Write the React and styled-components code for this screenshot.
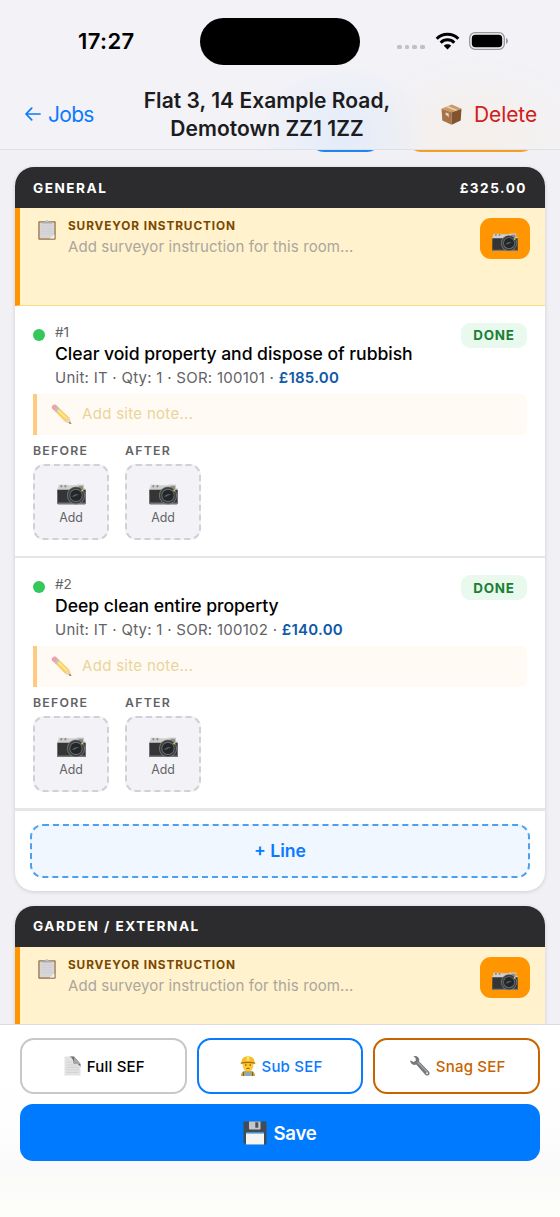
import React from "react";
import styled, { createGlobalStyle } from "styled-components";

const GlobalStyle = createGlobalStyle`
	* {
		box-sizing: border-box;
	}
	body {
		margin: 0;
		font-family: Inter, "Liberation Sans", sans-serif;
		color: #1c1c1e;
	}
	button {
		font-family: inherit;
		padding: 0;
		margin: 0;
	}
	svg {
		display: block;
		flex-shrink: 0;
	}
`;

const Screen = styled.div`
	width: 560px;
	height: 1217px;
	display: flex;
	flex-direction: column;
	overflow: hidden;
	background: #f0f0f5;
`;

const Header = styled.header`
	height: 150px;
	flex-shrink: 0;
	border-bottom: 1px solid #dfdfe8;
	background:
		radial-gradient(ellipse 85px 70px at 345px 135px, rgba(212, 228, 252, 0.5), transparent),
		radial-gradient(ellipse 120px 80px at 475px 135px, rgba(248, 236, 220, 0.5), transparent),
		#f2f2f7;
`;

const StatusBar = styled.div`
	height: 82px;
	display: grid;
	grid-template-columns: 200px 160px 200px;
	align-items: center;
`;

const Clock = styled.div`
	padding-left: 78px;
	font-size: 22px;
	font-weight: 600;
	letter-spacing: 0.4px;
	color: #000;
`;

const Island = styled.div`
	height: 47px;
	border-radius: 24px;
	background: #000;
`;

const Signals = styled.div`
	display: flex;
	align-items: center;
	padding-left: 37px;
`;

const Dots = styled.div`
	display: flex;
	gap: 3px;
	margin: 12px 10px 0 0;
`;

const Dot = styled.i`
	width: 4.7px;
	height: 4.7px;
	border-radius: 1.6px;
	background: #c0c0c5;
`;

const BatteryBox = styled.div`
	margin-left: 9px;
`;

const Nav = styled.div`
	height: 64px;
	display: grid;
	grid-template-columns: 120px 294px 146px;
	align-items: center;
`;

const BackLink = styled.button`
	display: flex;
	align-items: center;
	gap: 7px;
	margin-left: 25px;
	border: 0;
	background: none;
	color: #0a7aff;
	font-size: 21px;
	letter-spacing: -0.7px;
`;

const JobTitle = styled.h1`
	margin: 0;
	padding-top: 2px;
	text-align: center;
	font-size: 21px;
	line-height: 28px;
	font-weight: 600;
	letter-spacing: 0.05px;
`;

const DeleteLink = styled.button`
	display: flex;
	align-items: center;
	gap: 12px;
	margin-left: 27px;
	border: 0;
	background: none;
	color: #d0201a;
	font-size: 21px;
	letter-spacing: -0.1px;
`;

const Content = styled.main`
	flex: 1;
	min-height: 0;
	overflow: hidden;
`;

const PillRow = styled.div`
	height: 2px;
	display: flex;
	align-items: flex-end;
	gap: 26px;
	padding-left: 310px;
	overflow: hidden;
	margin-bottom: 15.4px;
`;

const Pill = styled.div`
	flex-shrink: 0;
	width: ${props => props.$width}px;
	height: 32px;
	border-radius: 14px;
	background: ${props => props.$color};
`;

const Card = styled.section`
	margin: 0 15px 15.3px;
	border-radius: 19px;
	overflow: hidden;
	background: #fff;
	box-shadow: 0 1px 4px rgba(0, 0, 0, 0.14);
`;

const CardHead = styled.div`
	height: 40.6px;
	display: flex;
	justify-content: space-between;
	align-items: center;
	padding: 0 18px;
	background: #2c2c2e;
	color: #fff;
	font-size: 13.6px;
	font-weight: 700;
	letter-spacing: 1.5px;
`;

const Instruction = styled.div`
	height: 98px;
	display: flex;
	align-items: flex-start;
	padding: 10px 15px 0 18px;
	border-left: 5px solid #ff9500;
	border-bottom: 1px solid #fbdc82;
	background: #fff2cc;
`;

const InstructionBody = styled.div`
	flex: 1;
	margin-left: 12px;
`;

const InstructionLabel = styled.div`
	font-size: 11.8px;
	line-height: 16px;
	font-weight: 700;
	letter-spacing: 0.9px;
	color: #7a4800;
`;

const InstructionHint = styled.div`
	font-size: 15px;
	line-height: 25px;
	letter-spacing: 0.1px;
	color: #aba69e;
`;

const PhotoButton = styled.button`
	width: 50px;
	height: 41px;
	display: flex;
	align-items: center;
	justify-content: center;
	padding-top: 7px;
	border: 0;
	border-radius: 11px;
	background: #ff9500;
`;

const Item = styled.article`
	height: 252.5px;
	padding: 16.6px 18px 0;
	border-bottom: ${props => (props.$last ? 3 : 2)}px solid #e6e6e9;
`;

const ItemTop = styled.div`
	display: flex;
	align-items: flex-start;
`;

const StatusDot = styled.i`
	width: 12px;
	height: 12px;
	margin: 6px 10px 0 0;
	border-radius: 50%;
	background: #34c759;
`;

const ItemInfo = styled.div`
	flex: 1;
`;

const ItemNumber = styled.div`
	font-size: 13.6px;
	line-height: 18px;
	color: #636366;
`;

const ItemName = styled.div`
	font-size: 17.6px;
	line-height: 26px;
	font-weight: 500;
	letter-spacing: -0.05px;
	color: #000;
`;

const ItemMeta = styled.div`
	font-size: 15px;
	line-height: 22px;
	letter-spacing: 0.26px;
	color: #636366;
	strong {
		font-weight: 600;
		color: #1058a8;
	}
`;

const Badge = styled.span`
	width: 66px;
	height: 25px;
	display: flex;
	align-items: center;
	justify-content: center;
	border-radius: 9px;
	background: #e9f9ee;
	color: #1a7f37;
	font-size: 13.4px;
	font-weight: 700;
	letter-spacing: 0.8px;
`;

const SiteNote = styled.div`
	height: 41px;
	display: flex;
	align-items: center;
	gap: 10px;
	margin-top: 5px;
	padding: 0 0 0 14px;
	border-left: 4px solid #ffca80;
	border-radius: 0 6px 6px 0;
	background: #fffbf4;
	color: #ead49a;
	font-size: 15px;
	letter-spacing: 0.3px;
	span {
		margin-top: -2px;
	}
`;

const Photos = styled.div`
	display: flex;
	gap: 16px;
	margin-top: 8.3px;
`;

const PhotoLabel = styled.div`
	font-size: 12.3px;
	line-height: 16px;
	font-weight: 600;
	letter-spacing: 1.25px;
	color: #636366;
`;

const PhotoSlot = styled.button`
	width: 76px;
	height: 76px;
	display: flex;
	flex-direction: column;
	align-items: center;
	justify-content: center;
	margin-top: 5px;
	padding-top: 11px;
	border: 2px dashed #d0d0d5;
	border-radius: 11px;
	background: #f2f2f7;
	color: #636366;
	font-size: 12.4px;
	line-height: 26px;
`;

const CardFoot = styled.div`
	padding: 12.9px 15px 13px;
`;

const AddLine = styled.button`
	width: 100%;
	height: 54px;
	border: 2px dashed #4d9ff4;
	border-radius: 13px;
	background: #f0f7ff;
	color: #0a7aff;
	font-size: 17.6px;
	font-weight: 600;
`;

const Footer = styled.footer`
	height: 193px;
	flex-shrink: 0;
	padding: 13px 20px 0;
	border-top: 1px solid #dcdce0;
	background: linear-gradient(#fff 0%, #fefefe 50%, #fafafa 74%, #fdfdfa 100%);
`;

const ExportRow = styled.div`
	display: grid;
	grid-template-columns: repeat(3, 1fr);
	gap: 10px;
`;

const ExportButton = styled.button`
	height: 56px;
	display: flex;
	align-items: center;
	justify-content: center;
	gap: 6px;
	padding-left: 2px;
	border: 2px solid ${props => props.$border};
	border-radius: 14px;
	background: #fff;
	color: ${props => props.$color};
	font-size: 15px;
	font-weight: 500;
	letter-spacing: 0.2px;
`;

const SaveButton = styled.button`
	width: 100%;
	height: 57px;
	display: flex;
	align-items: center;
	justify-content: center;
	gap: 6px;
	margin-top: 10px;
	border: 0;
	border-radius: 13px;
	background: #007aff;
	color: #fff;
	font-size: 18.6px;
	font-weight: 600;
	letter-spacing: -0.2px;
`;

const ArrowIcon = () => (
	<svg width="16" height="14" viewBox="0 0 16 14" fill="none" stroke="#0a7aff" strokeWidth="1.7" strokeLinecap="round" strokeLinejoin="round">
		<path d="M15 7H1M6.7 1.2 1 7l5.7 5.8" />
	</svg>
);

const WifiIcon = () => (
	<svg width="25" height="18" viewBox="0 0 25 18" fill="none" stroke="#000" strokeWidth="3">
		<path d="M1.7 6.7C7.5.8 17.5.8 23.3 6.7" />
		<path d="M5.7 10.7c3.8-3.8 9.8-3.8 13.6 0" />
		<path d="M8.8 13.7c2-1.9 5.4-1.9 7.4 0L12.5 17.5Z" fill="#000" stroke="none" />
	</svg>
);

const BatteryIcon = () => (
	<svg width="40" height="18" viewBox="0 0 40 18">
		<rect x=".7" y=".7" width="34.6" height="16.6" rx="5.3" fill="none" stroke="#98989c" strokeWidth="1.3" />
		<rect x="2.8" y="2.8" width="30.4" height="12.4" rx="3.6" />
		<path d="M37 6c2.5.7 2.5 5.3 0 6z" fill="#98989c" />
	</svg>
);

const BoxIcon = () => (
	<svg width="21" height="21" viewBox="0 0 21 21">
		<path d="M.5 4.7 10.7 8v12.7L1.3 16.5Z" fill="#a87447" />
		<path d="M10.7 8 20.5 4.7 19.7 16.5 10.7 20.7Z" fill="#80542f" />
		<path d="M.5 4.7 10.8.4l9.7 4.3L10.7 8.5Z" fill="#c99a69" />
		<path d="m4.8 3 9.8 3.9 2-.8-9.7-4Z" fill="#ead0a8" />
		<path d="m4.7 8.5 3 1v4l-1.3-1.7-1.7-.8Z" fill="#e7dccc" />
	</svg>
);

const ClipboardIcon = () => (
	<svg width="18" height="22" viewBox="0 -1 18 22">
		<rect x=".3" y="2.3" width="17.4" height="18.4" rx="1" fill="#9b7245" />
		<rect x="1.6" y="3.5" width="14.8" height="15.9" fill="#d6d6d9" />
		<path d="M3.5 7h11M3.5 9.5h11M3.5 12h11M3.5 14.5h11" stroke="#cdcdd0" strokeWidth=".8" />
		<path d="m11.5 19.4 4.9-4v4z" fill="#f0f0f0" />
		<path d="M4 4.6V3l3-.4Q9-.6 11 2.6l3 .4v1.6z" fill="#a9adb2" />
		<circle cx="9" cy="2" r=".7" fill="#f0e9cc" />
	</svg>
);

const CameraIcon = ({ width = 29 }) => (
	<svg width={width} height={width * 0.71} viewBox="0 0 29 20.6">
		<path d="M.3 5 1.5 2.5V.8h8l2 .5h8V.5H27v3.3l1.7 1V10H.3z" fill="#cfd0ce" />
		<path d="M.3 5.8h28.4v13.5q0 1-1 1H1.3q-1 0-1-1z" fill="#353535" />
		<path d="M.3 18.6h28.4v.9q0 .7-1 .7H1.3q-1 0-1-.7z" fill="#77777a" />
		<path d="M3.5 1.2h1.7v2H3.5zM7.5 1.2h1.8v2H7.5z" fill="#858585" />
		<rect x="21.5" y="1.8" width="4.7" height="3.3" fill="#8d8e8d" />
		<circle cx="19" cy="11.4" r="9" fill="#7b7e7e" />
		<circle cx="19" cy="11.4" r="8.2" fill="#3c3e40" />
		<circle cx="19" cy="11.4" r="6.6" fill="#6c7172" />
		<circle cx="19" cy="11.4" r="5.7" fill="#24272a" />
		<path d="M15 12.5q2.5-3.6 7.5-2.200-2 .3-3.500 1.400-1.700 1.300-4 .8z" fill="#596062" />
		<circle cx="25.2" cy="6.5" r="1" fill="#e8cf38" />
	</svg>
);

const PencilIcon = () => (
	<svg width="21" height="21" viewBox="0 0 21 21" opacity=".76">
		<path d="m4.2 7.4 3.3-4.1 10.9 10.4L20.5 20l-6.400-2.200z" fill="#f5c33b" />
		<path d="m6 5.2 10.7 10.3" stroke="#ffe47b" strokeWidth="1.6" />
		<path d="m14.1 17.8 1.3-3.200 3-.9L20.500 20z" fill="#ebc99b" />
		<path d="m18.600 17.800 1.900 2.200-2.600-.8z" fill="#333" />
		<path d="m3.200 6.600 3.400-4.200 1.900 1.800-3.400 4.200z" fill="#a7b3bd" />
		<path d="M3.400 6.800 1 4.500C0 2.300 2-.2 4.600.5l2.300 2.200z" fill="#ea8790" />
	</svg>
);

const PageIcon = () => (
	<svg width="17" height="20" viewBox="0 0 17 20">
		<path d="M.5.5H10L16.5 8v11.5H.5z" fill="#e2e2e2" />
		<path d="M2.5 9h12M2.5 11.5h12M2.5 14h12M2.5 16.5h12M2.5 6h5" stroke="#d3d3d3" strokeWidth=".9" />
		<path d="M5.5.5Q9.5 2 9.700 7.400q4-.5 6.800 3.300V8L10 .5z" fill="#6b6d6d" />
		<path d="M10 .5 16.500 8H9.700q.5-4.500.3-7.500z" fill="#a6a6a6" />
	</svg>
);

const WorkerIcon = () => (
	<svg width="16" height="20" viewBox="0 0 16 20">
		<path d="M1 20q0-4.500 4-4.800h6q4 .3 4 4.800z" fill="#e7a31d" />
		<path d="M4.500 14.500h7L10.500 20h-5z" fill="#79afd7" />
		<path d="M6 13h4v2.500L8 17.200l-2-1.700z" fill="#e5a100" />
		<path d="M2.700 6.500h10.600v3.200q-.5 5-5.300 5.800-4.800-.8-5.300-5.800z" fill="#ffc82d" />
		<path d="M1.200 7.500C1.300 2.800 4 .3 8 .3s6.700 2.500 6.800 7.200z" fill="#f5bd28" />
		<path d="M6.700 0h2.600v5H6.700z" fill="#ffe074" />
		<path d="M.8 6.600Q8 4.800 15.200 6.600v1.200Q8 6.400.8 7.800z" fill="#a86b13" />
		<path d="M5 9h1.500M9.500 9H11" stroke="#5c3c16" strokeWidth="1.2" />
		<path d="M6.300 12.400h3.400" stroke="#9c4e20" strokeWidth=".9" />
		<path d="M3.500 15.500V20M12.500 15.500V20" stroke="#5f6a5a" strokeWidth="1.2" />
	</svg>
);

const WrenchIcon = () => (
	<svg width="20" height="20" viewBox="0 0 20 20">
		<path d="M.2 4.200 3.500 6l2.300-1.300-.2-2.800L3.300.400q3-1 5 1 1.400 1.700.8 4l9.800 10q1.300 2-.1 3.500-1.600 1.400-3.300 0L6.300 8.600Q3.300 9.700 1.300 7.600.100 6 .2 4.200z" fill="#74787b" />
		<path d="m7.500 6.200 9.800 10" stroke="#a9acae" strokeWidth="1.1" />
		<circle cx="17" cy="17.2" r="1" fill="#eee" />
	</svg>
);

const DiskIcon = () => (
	<svg width="24" height="24" viewBox="0 0 24 24">
		<path d="M1 .5h22.500v23H3L.5 21.500V1z" fill="#434b55" />
		<path d="M6 .5h11.500v7.200q0 .8-.8.800H6.800Q6 8.500 6 7.700z" fill="#c3c7ca" />
		<rect x="12.3" y="1.3" width="3" height="5.4" fill="#4b5159" />
		<path d="M3 11.500h18v12H3z" fill="#f5f5f4" />
		<path d="M3 11h18v1.600H3z" fill="#4b93ce" />
	</svg>
);

const rooms = [
	{
		name: "GENERAL",
		total: "£325.00",
		items: [
			{ id: 1, name: "Clear void property and dispose of rubbish", sor: "100101", price: "£185.00" },
			{ id: 2, name: "Deep clean entire property", sor: "100102", price: "£140.00" }
		]
	},
	{ name: "GARDEN / EXTERNAL", items: [] }
];

const LineItem = ({ item, last }) => (
	<Item $last={last}>
		<ItemTop>
			<StatusDot />
			<ItemInfo>
				<ItemNumber>#{item.id}</ItemNumber>
				<ItemName>{item.name}</ItemName>
				<ItemMeta>
					Unit: IT · Qty: 1 · SOR: {item.sor} · <strong>{item.price}</strong>
				</ItemMeta>
			</ItemInfo>
			<Badge>DONE</Badge>
		</ItemTop>
		<SiteNote>
			<PencilIcon />
			<span>Add site note...</span>
		</SiteNote>
		<Photos>
			{["BEFORE", "AFTER"].map(label => (
				<div key={label}>
					<PhotoLabel>{label}</PhotoLabel>
					<PhotoSlot>
						<CameraIcon />
						Add
					</PhotoSlot>
				</div>
			))}
		</Photos>
	</Item>
);

const Room = ({ room }) => (
	<Card>
		<CardHead>
			<span>{room.name}</span>
			<span>{room.total}</span>
		</CardHead>
		<Instruction>
			<ClipboardIcon />
			<InstructionBody>
				<InstructionLabel>SURVEYOR INSTRUCTION</InstructionLabel>
				<InstructionHint>Add surveyor instruction for this room...</InstructionHint>
			</InstructionBody>
			<PhotoButton>
				<CameraIcon width={26} />
			</PhotoButton>
		</Instruction>
		{room.items.map((item, i) => (
			<LineItem key={item.id} item={item} last={i === room.items.length - 1} />
		))}
		{room.items.length > 0 && (
			<CardFoot>
				<AddLine>+ Line</AddLine>
			</CardFoot>
		)}
	</Card>
);

export default () => (
	<Screen>
		<GlobalStyle />
		<Header>
			<StatusBar>
				<Clock>17:27</Clock>
				<Island />
				<Signals>
					<Dots>
						<Dot />
						<Dot />
						<Dot />
						<Dot />
					</Dots>
					<WifiIcon />
					<BatteryBox>
						<BatteryIcon />
					</BatteryBox>
				</Signals>
			</StatusBar>
			<Nav>
				<BackLink>
					<ArrowIcon />
					Jobs
				</BackLink>
				<JobTitle>
					Flat 3, 14 Example Road,
					<br />
					Demotown ZZ1 1ZZ
				</JobTitle>
				<DeleteLink>
					<BoxIcon />
					Delete
				</DeleteLink>
			</Nav>
		</Header>
		<Content>
			<PillRow>
				<Pill $width={71} $color="#1c86f5" />
				<Pill $width={128} $color="#f5a023" />
			</PillRow>
			{rooms.map(room => (
				<Room key={room.name} room={room} />
			))}
		</Content>
		<Footer>
			<ExportRow>
				<ExportButton $border="#c7c7cc" $color="#000">
					<PageIcon />
					Full SEF
				</ExportButton>
				<ExportButton $border="#0a7aff" $color="#0a7aff">
					<WorkerIcon />
					Sub SEF
				</ExportButton>
				<ExportButton $border="#c86400" $color="#c86400">
					<WrenchIcon />
					Snag SEF
				</ExportButton>
			</ExportRow>
			<SaveButton>
				<DiskIcon />
				Save
			</SaveButton>
		</Footer>
	</Screen>
);
